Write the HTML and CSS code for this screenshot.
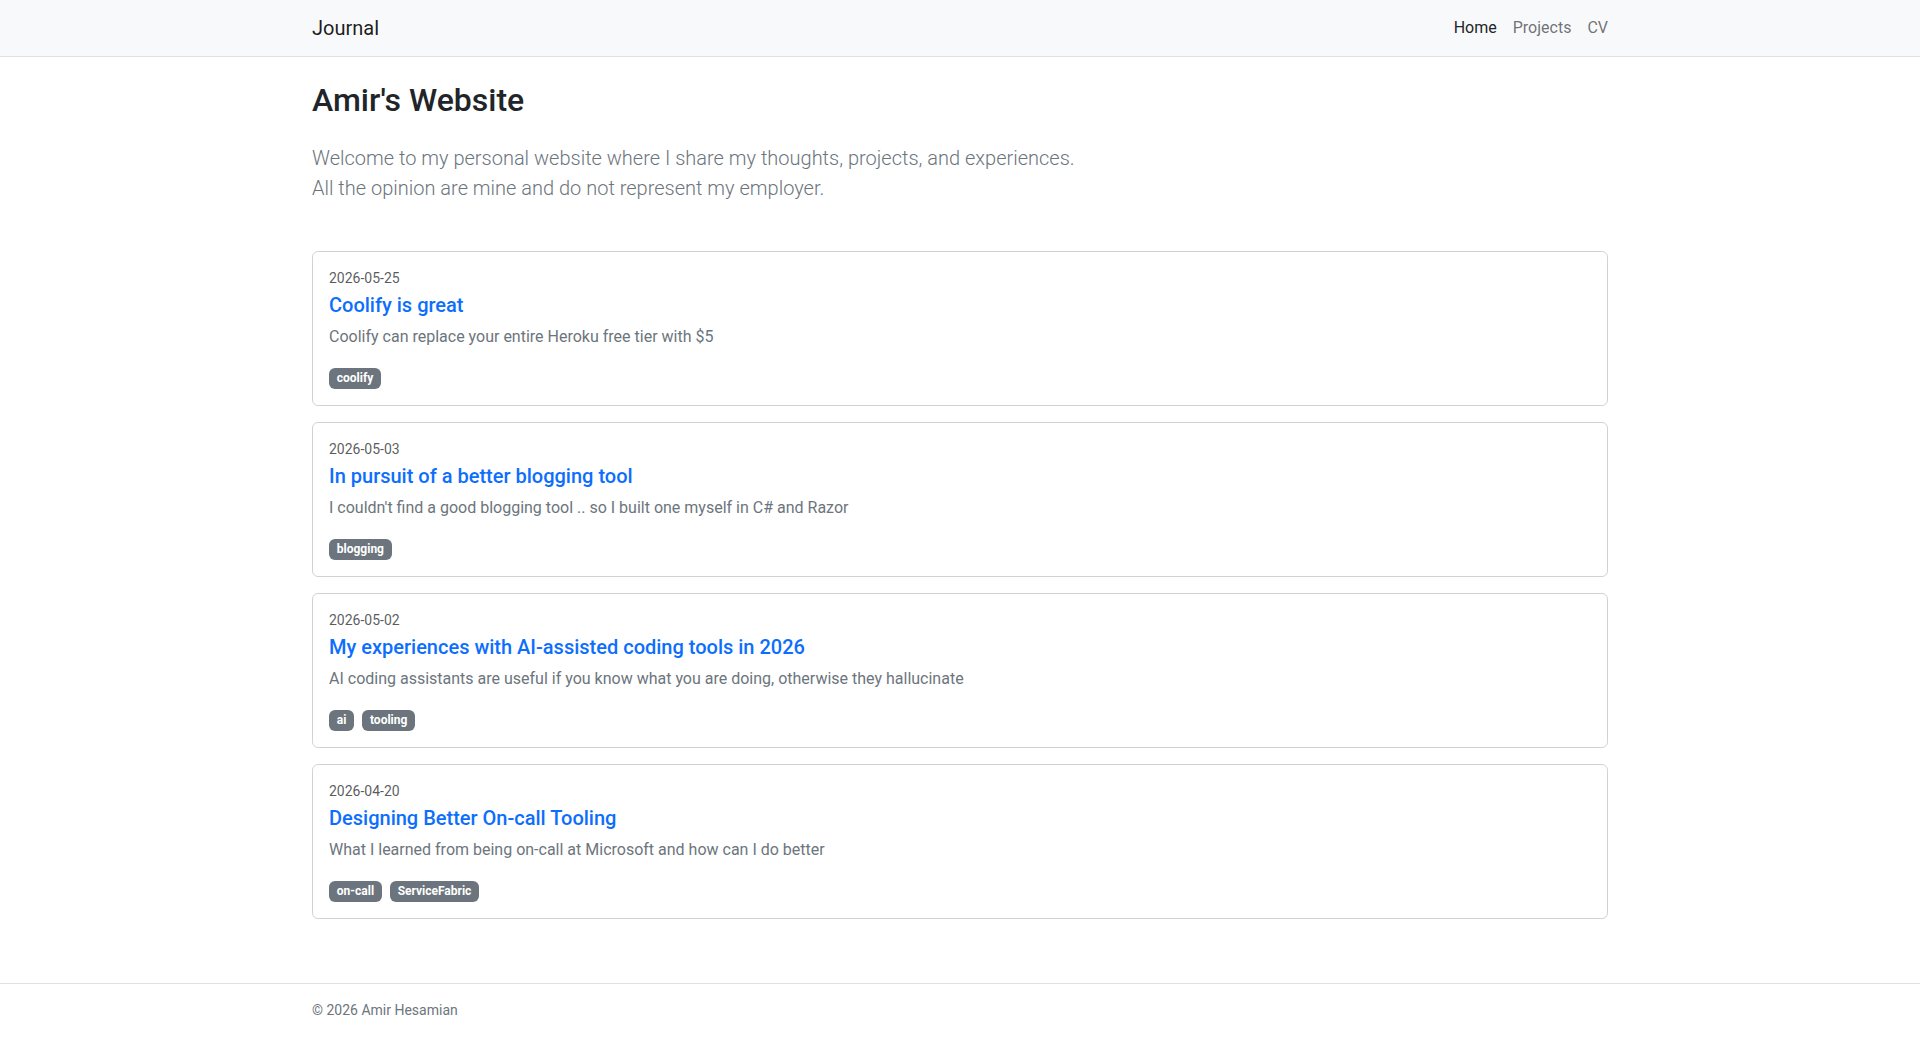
FILE: index.html
```html
<!DOCTYPE html>
<html>
<head>
    <meta charset="utf-8">
    <title>Amir's Website</title>
    <link rel="stylesheet" href="styles.css">
</head>
<body>
    <nav class="navbar">
        <div class="container navbar-inner">
            <a class="navbar-brand" href="#">Journal</a>
            <div class="nav-links">
                <a class="nav-link active" href="#">Home</a>
                <a class="nav-link" href="#">Projects</a>
                <a class="nav-link" href="#">CV</a>
            </div>
        </div>
    </nav>

    <main class="container main">
        <h1>Amir's Website</h1>
        <p class="lead">
            Welcome to my personal website where I share my thoughts, projects, and experiences.<br>
            All the opinion are mine and do not represent my employer.
        </p>

        <div class="post-card">
            <small class="post-date">2026-05-25</small>
            <h5 class="post-title"><a href="#">Coolify is great</a></h5>
            <p class="post-summary">Coolify can replace your entire Heroku free tier with $5</p>
            <div class="tags">
                <span class="badge">coolify</span>
            </div>
        </div>

        <div class="post-card">
            <small class="post-date">2026-05-03</small>
            <h5 class="post-title"><a href="#">In pursuit of a better blogging tool</a></h5>
            <p class="post-summary">I couldn't find a good blogging tool .. so I built one myself in C# and Razor</p>
            <div class="tags">
                <span class="badge">blogging</span>
            </div>
        </div>

        <div class="post-card">
            <small class="post-date">2026-05-02</small>
            <h5 class="post-title"><a href="#">My experiences with AI-assisted coding tools in 2026</a></h5>
            <p class="post-summary">AI coding assistants are useful if you know what you are doing, otherwise they hallucinate</p>
            <div class="tags">
                <span class="badge">ai</span>
                <span class="badge">tooling</span>
            </div>
        </div>

        <div class="post-card">
            <small class="post-date">2026-04-20</small>
            <h5 class="post-title"><a href="#">Designing Better On-call Tooling</a></h5>
            <p class="post-summary">What I learned from being on-call at Microsoft and how can I do better</p>
            <div class="tags">
                <span class="badge">on-call</span>
                <span class="badge">ServiceFabric</span>
            </div>
        </div>
    </main>

    <footer class="footer">
        <div class="container footer-text">&copy; 2026 Amir Hesamian</div>
    </footer>
</body>
</html>
```

FILE: styles.css
```css
body {
    margin: 0;
    font-family: Roboto, "Liberation Sans", sans-serif;
    font-size: 16px;
    line-height: 1.5;
    color: #212529;
    background: #fff;
}

.container {
    max-width: 1296px;
    margin: 0 auto;
    padding: 0 12px;
}

a {
    text-decoration: none;
}

.navbar {
    background: #f8f9fa;
    border-bottom: 1px solid #dee2e6;
    padding: 8px 0;
}

.navbar-inner {
    display: flex;
    align-items: center;
    justify-content: space-between;
}

.navbar-brand {
    font-size: 20px;
    line-height: 30px;
    padding: 5px 0;
    color: rgba(0, 0, 0, 0.9);
}

.nav-links {
    display: flex;
    gap: 16px;
}

.nav-link {
    padding: 8px 0;
    color: rgba(33, 37, 41, 0.65);
}

.nav-link.active {
    color: #212529;
}

.main {
    padding-top: 24px;
    padding-bottom: 24px;
}

h1 {
    font-size: 32px;
    font-weight: 500;
    line-height: 1.2;
    margin: 0 0 24px;
}

.lead {
    font-size: 20px;
    font-weight: 300;
    color: #6c757d;
    margin: 0 0 48px;
}

.post-card {
    border: 1px solid rgba(0, 0, 0, 0.175);
    border-radius: 6px;
    padding: 16px;
    margin-bottom: 16px;
}

.post-date {
    display: block;
    font-size: 14px;
    color: rgba(33, 37, 41, 0.75);
    margin-bottom: 4px;
}

.post-title {
    font-size: 20px;
    font-weight: 500;
    line-height: 1.2;
    margin: 0 0 8px;
}

.post-title a {
    color: #0d6efd;
}

.post-summary {
    color: #6c757d;
    margin: 0 0 16px;
}

.badge {
    display: inline-block;
    padding: 0.35em 0.65em;
    margin-right: 4px;
    font-size: 12px;
    font-weight: 700;
    line-height: 1;
    color: #fff;
    background: #6c757d;
    border-radius: 6px;
    vertical-align: baseline;
}

.footer {
    margin-top: 24px;
    border-top: 1px solid #dee2e6;
    padding: 16px 0;
}

.footer-text {
    font-size: 14px;
    color: #6c757d;
}
```
